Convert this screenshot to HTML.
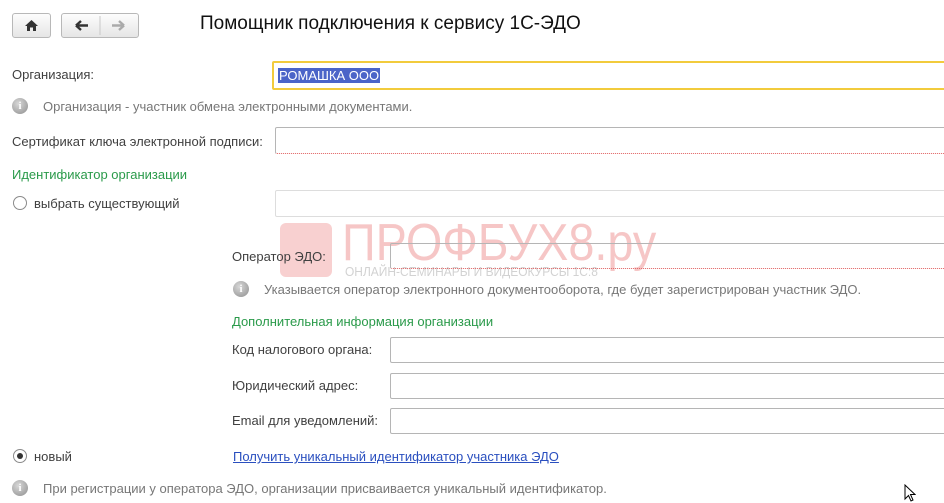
<!DOCTYPE html>
<html><head><meta charset="utf-8"><style>
body{margin:0;width:944px;height:503px;background:#fff;overflow:hidden;position:relative;font-family:"Liberation Sans","DejaVu Sans",sans-serif;font-size:13px;color:#404040}
.a{position:absolute;white-space:nowrap}
.btn{position:absolute;border:1px solid #b8b8b8;border-radius:3px;background:linear-gradient(#fdfdfd,#e6e6e6);box-sizing:border-box}
.inp{position:absolute;border:1px solid #b5b5b5;border-radius:2px;background:#fff;box-sizing:border-box}
.red{border-bottom:1px dotted #e06060}
.info{position:absolute;width:16px;height:16px;border-radius:50%;background:radial-gradient(circle at 40% 35%,#d8d8d8,#8e8e8e);color:#fff;font:bold 11px "Liberation Serif",serif;text-align:center;line-height:16px}
.g{color:#2a9a4a}
.rad{position:absolute;width:14px;height:14px;border:1px solid #8a8a8a;border-radius:50%;box-sizing:border-box;background:#fff}
</style></head><body>
<div class="btn" style="left:12px;top:13px;width:39px;height:25px"><svg width="37" height="23"><path d="M12 12 L18.5 6 L25 12 L23 12 L23 17 L20 17 L20 13.5 L17 13.5 L17 17 L14 17 L14 12Z" fill="#333"/></svg></div>
<div class="btn" style="left:61px;top:13px;width:78px;height:25px"><svg width="76" height="23"><path d="M14 11.5H26M14 11.5L19 7M14 11.5L19 16" stroke="#333" stroke-width="2.4" fill="none"/><line x1="38" y1="2" x2="38" y2="21" stroke="#c8c8c8"/><path d="M50 11.5H62M62 11.5L57 7M62 11.5L57 16" stroke="#aaa" stroke-width="2.4" fill="none"/></svg></div>
<div class="a" style="left:200px;top:13px;font-size:19px;color:#111">Помощник подключения к сервису 1С-ЭДО</div>

<div class="a" style="left:12px;top:67px">Организация:</div>
<div class="inp" style="left:272px;top:61px;width:680px;height:29px;border:2px solid #f2cb3c"><span style="position:absolute;left:4px;top:5px;background:#4b64c8;color:#fff;padding:0 1px">РОМАШКА ООО</span></div>
<div class="info" style="left:12px;top:98px">i</div>
<div class="a" style="left:43px;top:99px;color:#777">Организация - участник обмена электронными документами.</div>

<div class="a" style="left:12px;top:134px">Сертификат ключа электронной подписи:</div>
<div class="inp red" style="left:275px;top:127px;width:680px;height:27px"></div>
<div class="a g" style="left:12px;top:167px">Идентификатор организации</div>
<div class="rad" style="left:13px;top:196px"></div>
<div class="a" style="left:34px;top:196px">выбрать существующий</div>
<div class="inp" style="left:275px;top:190px;width:680px;height:27px;border-color:#ddd"></div>

<div class="a" style="left:280px;top:223px;width:52px;height:54px;background:#f8d0d0;border-radius:6px"></div>
<div class="a" style="left:342px;top:213px;font-size:52px;color:#f6c6c6;transform:scaleX(0.9);transform-origin:0 0">ПРОФБУХ8.ру</div>
<div class="a" style="left:345px;top:264px;font-size:13px;color:#d2d2d2;transform:scaleX(0.92);transform-origin:0 0">ОНЛАЙН-СЕМИНАРЫ И ВИДЕОКУРСЫ 1С:8</div>

<div class="a" style="left:232px;top:249px">Оператор ЭДО:</div>
<div class="inp red" style="left:390px;top:243px;width:560px;height:26px;background:transparent"></div>
<div class="info" style="left:233px;top:281px">i</div>
<div class="a" style="left:264px;top:282px;color:#777">Указывается оператор электронного документооборота, где будет зарегистрирован участник ЭДО.</div>
<div class="a g" style="left:232px;top:314px">Дополнительная информация организации</div>
<div class="a" style="left:232px;top:342px">Код налогового органа:</div>
<div class="inp" style="left:390px;top:337px;width:560px;height:26px"></div>
<div class="a" style="left:232px;top:378px">Юридический адрес:</div>
<div class="inp" style="left:390px;top:373px;width:560px;height:26px"></div>
<div class="a" style="left:232px;top:413px">Email для уведомлений:</div>
<div class="inp" style="left:390px;top:408px;width:560px;height:26px"></div>

<div class="rad" style="left:13px;top:449px"><div style="position:absolute;left:3px;top:3px;width:6px;height:6px;border-radius:50%;background:#333"></div></div>
<div class="a" style="left:34px;top:449px">новый</div>
<div class="a" style="left:233px;top:449px;color:#2a4fbf;text-decoration:underline">Получить уникальный идентификатор участника ЭДО</div>
<div class="info" style="left:12px;top:480px">i</div>
<div class="a" style="left:43px;top:481px;color:#777">При регистрации у оператора ЭДО, организации присваивается уникальный идентификатор.</div>
<svg class="a" style="left:904px;top:484px" width="12" height="18"><path d="M1 1V15L4.5 11.5L7 17L9 16L6.5 10.5H11Z" fill="#fff" stroke="#000"/></svg>
</body></html>
